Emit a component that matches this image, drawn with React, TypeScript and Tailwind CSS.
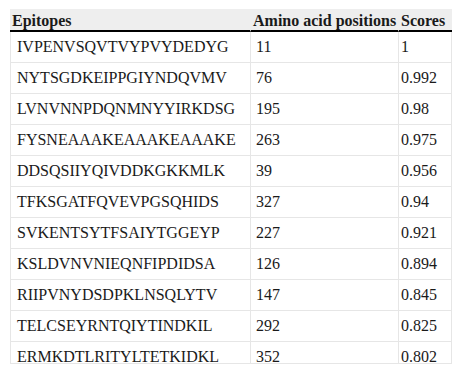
const rows: [string, string, string][] = [
  ["IVPENVSQVTVYPVYDEDYG", "11", "1"],
  ["NYTSGDKEIPPGIYNDQVMV", "76", "0.992"],
  ["LVNVNNPDQNMNYYIRKDSG", "195", "0.98"],
  ["FYSNEAAAKEAAAKEAAAKE", "263", "0.975"],
  ["DDSQSIIYQIVDDKGKKMLK", "39", "0.956"],
  ["TFKSGATFQVEVPGSQHIDS", "327", "0.94"],
  ["SVKENTSYTFSAIYTGGEYP", "227", "0.921"],
  ["KSLDVNVNIEQNFIPDIDSA", "126", "0.894"],
  ["RIIPVNYDSDPKLNSQLYTV", "147", "0.845"],
  ["TELCSEYRNTQIYTINDKIL", "292", "0.825"],
  ["ERMKDTLRITYLTETKIDKL", "352", "0.802"],
];

export default function App() {
  return (
    <div className="w-[461px] h-[374px] bg-white pt-[9px] pl-[10px] font-['Liberation_Serif',serif] text-[16px] text-[#1a1a1a]">
      <div className="w-[442px] h-[355px] overflow-hidden border-b border-[#e6e6e6]">
        <table className="w-[442px] table-fixed border-separate border-spacing-0">
          <colgroup>
            <col className="w-[241px]" />
            <col className="w-[148px]" />
            <col className="w-[53px]" />
          </colgroup>
          <thead>
            <tr className="bg-[#eeeeee]">
              <th className="text-left font-bold px-[2px] pt-[2px] pb-0 leading-[19px] border-b-2 border-b-black border-r border-r-[#eeeeee]">
                Epitopes
              </th>
              <th className="text-left font-bold px-[2px] pt-[2px] pb-0 leading-[19px] border-b-2 border-b-black border-r border-r-[#eeeeee] whitespace-nowrap">
                Amino acid positions
              </th>
              <th className="text-left font-bold px-[2px] pt-[2px] pb-0 leading-[19px] border-b-2 border-b-black">
                Scores
              </th>
            </tr>
          </thead>
          <tbody>
            {rows.map(([ep, pos, score]) => (
              <tr key={ep}>
                <td className="pl-[6px] py-[6px] leading-[18px] border-l border-r border-b border-[#e6e6e6]">
                  {ep}
                </td>
                <td className="pl-[5px] py-[6px] leading-[18px] border-r border-b border-[#e6e6e6]">
                  {pos}
                </td>
                <td className="pl-[2px] py-[6px] leading-[18px] border-r border-b border-[#e6e6e6]">
                  {score}
                </td>
              </tr>
            ))}
          </tbody>
        </table>
      </div>
    </div>
  );
}
